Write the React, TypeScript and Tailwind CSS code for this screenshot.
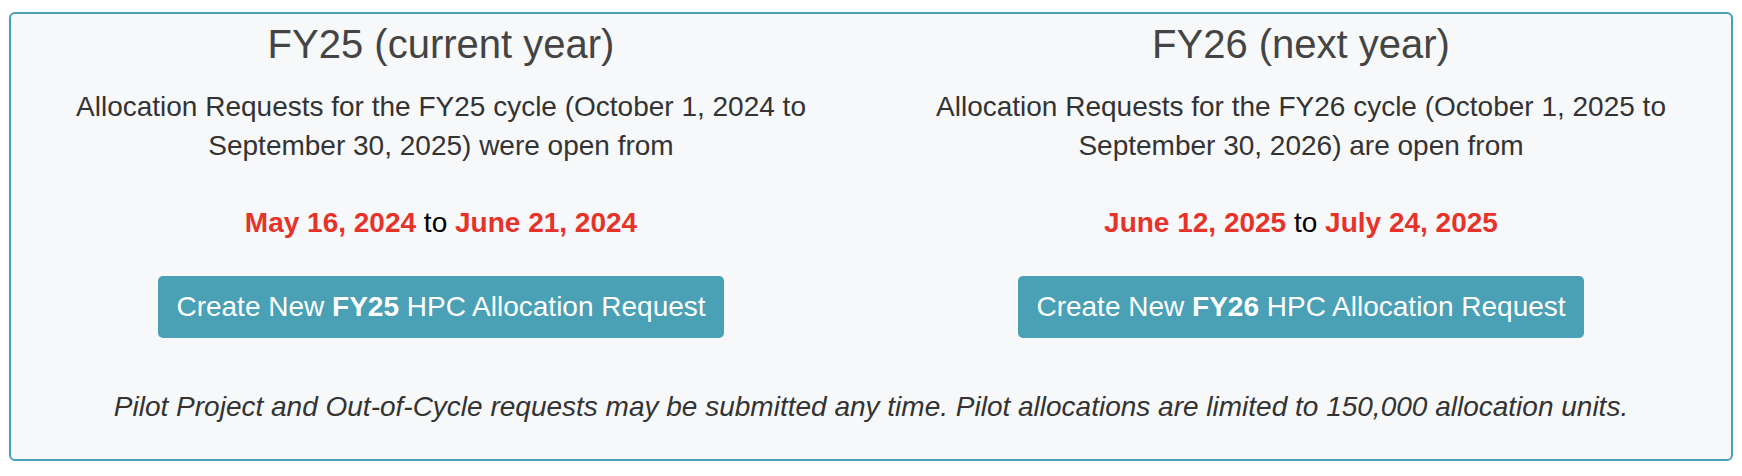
const CYCLES = [
  {
    title: "FY25 (current year)",
    fy: "FY25",
    text: "Allocation Requests for the FY25 cycle (October 1, 2024 to September 30, 2025) were open from",
    start: "May 16, 2024",
    end: "June 21, 2024",
  },
  {
    title: "FY26 (next year)",
    fy: "FY26",
    text: "Allocation Requests for the FY26 cycle (October 1, 2025 to September 30, 2026) are open from",
    start: "June 12, 2025",
    end: "July 24, 2025",
  },
]

export default function App() {
  return (
    <div className="px-[9px] pt-[12px] bg-white font-['Liberation_Sans',Arial,sans-serif]">
      <div className="border-2 border-[#4aa0b5] rounded-[6px] bg-[#f7f8fa] pt-[6px] pb-[33px]">
        {/* Cycle columns */}
        <div className="grid grid-cols-2">
          {CYCLES.map((c) => (
            <div key={c.fy} className="flex flex-col items-center text-center px-[15px]">
              <h2 className="text-[40px] leading-[48px] text-[#444] mb-[19px]">{c.title}</h2>
              <p className="text-[28px] leading-[39px] text-[#333] mb-[38px]">{c.text}</p>
              <p className="text-[28px] leading-[39px] text-black mb-[34px]">
                <span className="font-bold text-[#e6332a]">{c.start}</span> to{" "}
                <span className="font-bold text-[#e6332a]">{c.end}</span>
              </p>
              <button className="h-[62px] px-[18px] py-[10px] rounded-[5px] bg-[#4aa0b5] text-white text-[28px] leading-[42px]">
                Create New <b>{c.fy}</b> HPC Allocation Request
              </button>
            </div>
          ))}
        </div>

        {/* Footer note */}
        <p className="mt-[49px] text-center italic text-[28px] leading-[39px] text-[#333]">
          Pilot Project and Out-of-Cycle requests may be submitted any time. Pilot allocations are limited to 150,000
          allocation units.
        </p>
      </div>
    </div>
  )
}
